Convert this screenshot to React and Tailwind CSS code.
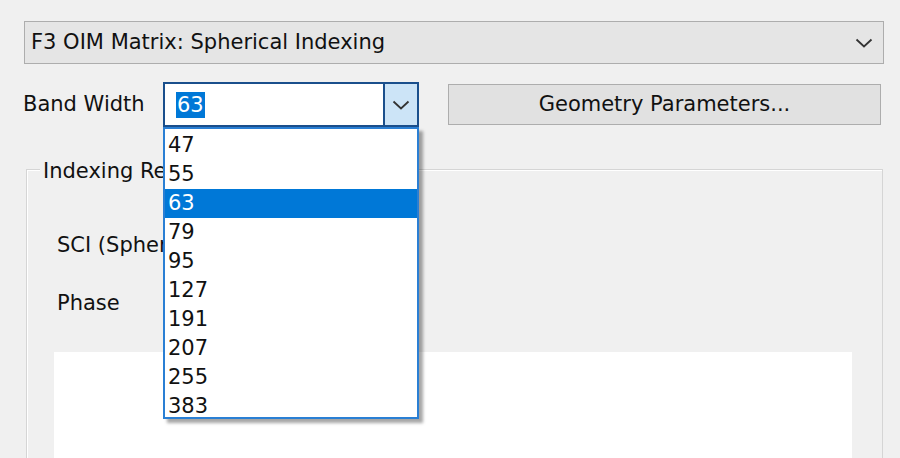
import React from 'react';

const font = { fontFamily: '"DejaVu Sans", Verdana, sans-serif' };

const sizes = ['47', '55', '63', '79', '95', '127', '191', '207', '255', '383'];

function Chevron({ className }) {
  return (
    <svg width="18" height="10" viewBox="0 0 18 10" className={className}>
      <path d="M1.5 1.5 L9 8.5 L16.5 1.5" fill="none" stroke="#333" strokeWidth="1.8" />
    </svg>
  );
}

export default function App() {
  return (
    <div
      className="w-[900px] h-[458px] bg-[#f0f0f0] overflow-hidden text-[21px] text-[#111]"
      style={font}
    >
      <div className="pt-[21px] pl-[24px] pr-[16px]">
        {/* profile selector */}
        <div className="h-[43px] w-[860px] flex items-center justify-between border border-[#adadad] bg-[#e5e5e5] pl-[6px] pr-[10px]">
          <span>F3 OIM Matrix: Spherical Indexing</span>
          <Chevron />
        </div>

        {/* band width row */}
        <div className="mt-[18px] flex items-center">
          <span className="w-[140px] -ml-[1px]">Band Width</span>
          <div className="relative">
            <div className="w-[256px] h-[45px] flex border-2 border-[#1a4f8c] bg-white">
              <div className="flex-1 flex items-center pl-[11px]">
                <span className="bg-[#0078d7] text-white leading-[26px] px-[1px]">63</span>
              </div>
              <div className="w-[34px] border-l-2 border-[#1a4f8c] bg-[#cce4f7] flex items-center justify-center">
                <Chevron />
              </div>
            </div>
            {/* open list */}
            <div className="absolute left-0 top-[45px] z-10 w-[256px] h-[292px] bg-white border-2 border-[#2a7fd4] shadow-[4px_4px_3px_rgba(0,0,0,0.35)] pt-[2px]">
              {sizes.map((s) => (
                <div
                  key={s}
                  className={
                    'h-[29px] leading-[29px] pl-[3px] ' +
                    (s === '63' ? 'bg-[#0078d7] text-white' : '')
                  }
                >
                  {s}
                </div>
              ))}
            </div>
          </div>
          <button className="ml-[29px] w-[433px] h-[41px] border border-[#adadad] bg-[#e1e1e1] text-[21px]">
            Geometry Parameters...
          </button>
        </div>

        {/* group box */}
        <div className="relative mt-[42px] ml-[2px] w-[857px] h-[300px] border border-[#d5d5d5] shadow-[inset_1px_1px_0_#ffffff]">
          <span className="absolute -top-[14px] left-[13px] bg-[#f0f0f0] px-[3px] whitespace-nowrap">
            Indexing Results
          </span>
          <div className="pl-[30px] pt-[60px] whitespace-nowrap">SCI (Spherical Indexing)</div>
          <div className="pl-[30px] pt-[26px]">Phase</div>
          <div className="mt-[33px] ml-[27px] w-[798px] h-[120px] bg-white" />
        </div>
      </div>
    </div>
  );
}
